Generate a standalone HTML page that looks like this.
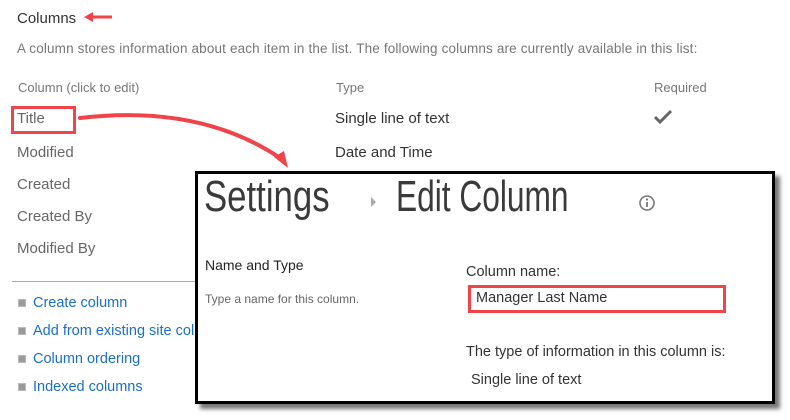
<!DOCTYPE html>
<html><head><style>
body{margin:0;width:790px;height:420px;background:#fff;position:relative;overflow:hidden;font-family:"Liberation Sans",sans-serif;}
.a{position:absolute;white-space:nowrap;}
.g{color:#666;font-size:15px;}
.h{color:#777;font-size:13px;}
.l{color:#1a6fc9;font-size:14.5px;}
.b{position:absolute;left:18px;width:6px;height:6px;background:#999;border:1px solid #bbb;}
</style></head><body>
<div class="a" style="left:17px;top:10px;font-size:15px;color:#333">Columns</div>
<div class="a" style="left:17px;top:41px;font-size:13.5px;color:#777;letter-spacing:0.15px">A column stores information about each item in the list. The following columns are currently available in this list:</div>
<div class="a h" style="left:18px;top:80px">Column (click to edit)</div>
<div class="a h" style="left:336px;top:80px">Type</div>
<div class="a h" style="left:654px;top:80px">Required</div>
<div class="a g" style="left:17px;top:110px">Title</div>
<div class="a" style="left:11px;top:106px;width:59px;height:22px;border:3px solid #f0444a"></div>
<div class="a" style="left:335px;top:110px;font-size:15px;color:#333">Single line of text</div>
<svg class="a" style="left:652px;top:108px" width="22" height="18"><path d="M3 9 L8 14 L19 3" stroke="#666" stroke-width="3" fill="none"/></svg>
<div class="a g" style="left:17px;top:144px">Modified</div>
<div class="a" style="left:335px;top:144px;font-size:15px;color:#333">Date and Time</div>
<div class="a g" style="left:17px;top:176px">Created</div>
<div class="a g" style="left:17px;top:208px">Created By</div>
<div class="a g" style="left:17px;top:240px">Modified By</div>
<div class="a" style="left:12px;top:281px;width:190px;height:1px;background:#aaa"></div>
<div class="b" style="top:299px"></div><div class="a l" style="left:33px;top:295px">Create column</div>
<div class="b" style="top:327px"></div><div class="a l" style="left:33px;top:323px">Add from existing site columns</div>
<div class="b" style="top:355px"></div><div class="a l" style="left:33px;top:351px">Column ordering</div>
<div class="b" style="top:383px"></div><div class="a l" style="left:33px;top:379px">Indexed columns</div>
<svg class="a" style="left:0;top:0" width="790" height="200">
<path d="M80 118 Q200 104 280 158" stroke="#f0444a" stroke-width="4" fill="none" stroke-linecap="round"/>
<path d="M274 157 L288 168 L284 151 Z" fill="#f0444a"/>
<path d="M88 17 L112 17" stroke="#f0444a" stroke-width="3"/>
<path d="M84 17 L93 12 L93 22 Z" fill="#f0444a"/>
</svg>
<div class="a" style="left:195px;top:171px;width:574px;height:227px;border:3px solid #000;background:#fff;box-shadow:5px 5px 4px #777;overflow:hidden">
<div class="a" style="left:6px;top:-2px;font-size:44px;color:#3a3a3a;transform:scaleX(0.79);transform-origin:left">Settings</div>
<svg class="a" style="left:172px;top:22px" width="8" height="12"><path d="M1 1 L6 6 L1 11 Z" fill="#aaa"/></svg>
<div class="a" style="left:198px;top:-2px;font-size:44px;color:#3a3a3a;transform:scaleX(0.72);transform-origin:left">Edit Column</div>
<svg class="a" style="left:440px;top:20px" width="18" height="18"><circle cx="9" cy="9" r="7" stroke="#777" stroke-width="1.6" fill="none"/><rect x="8.1" y="8" width="1.8" height="5" fill="#777"/><circle cx="9" cy="5.5" r="1.1" fill="#777"/></svg>
<div class="a" style="left:7px;top:83px;font-size:14px;color:#222">Name and Type</div>
<div class="a" style="left:7px;top:118px;font-size:12px;color:#666">Type a name for this column.</div>
<div class="a" style="left:268px;top:90px;font-size:14.5px;color:#333">Column name:</div>
<div class="a" style="left:270px;top:111px;width:252px;height:22px;border:3px solid #f0444a"></div>
<div class="a" style="left:278px;top:116px;font-size:14.5px;color:#333">Manager Last Name</div>
<div class="a" style="left:268px;top:170px;font-size:14.5px;color:#333">The type of information in this column is:</div>
<div class="a" style="left:273px;top:198px;font-size:14.5px;color:#333">Single line of text</div>
</div>
</body></html>
